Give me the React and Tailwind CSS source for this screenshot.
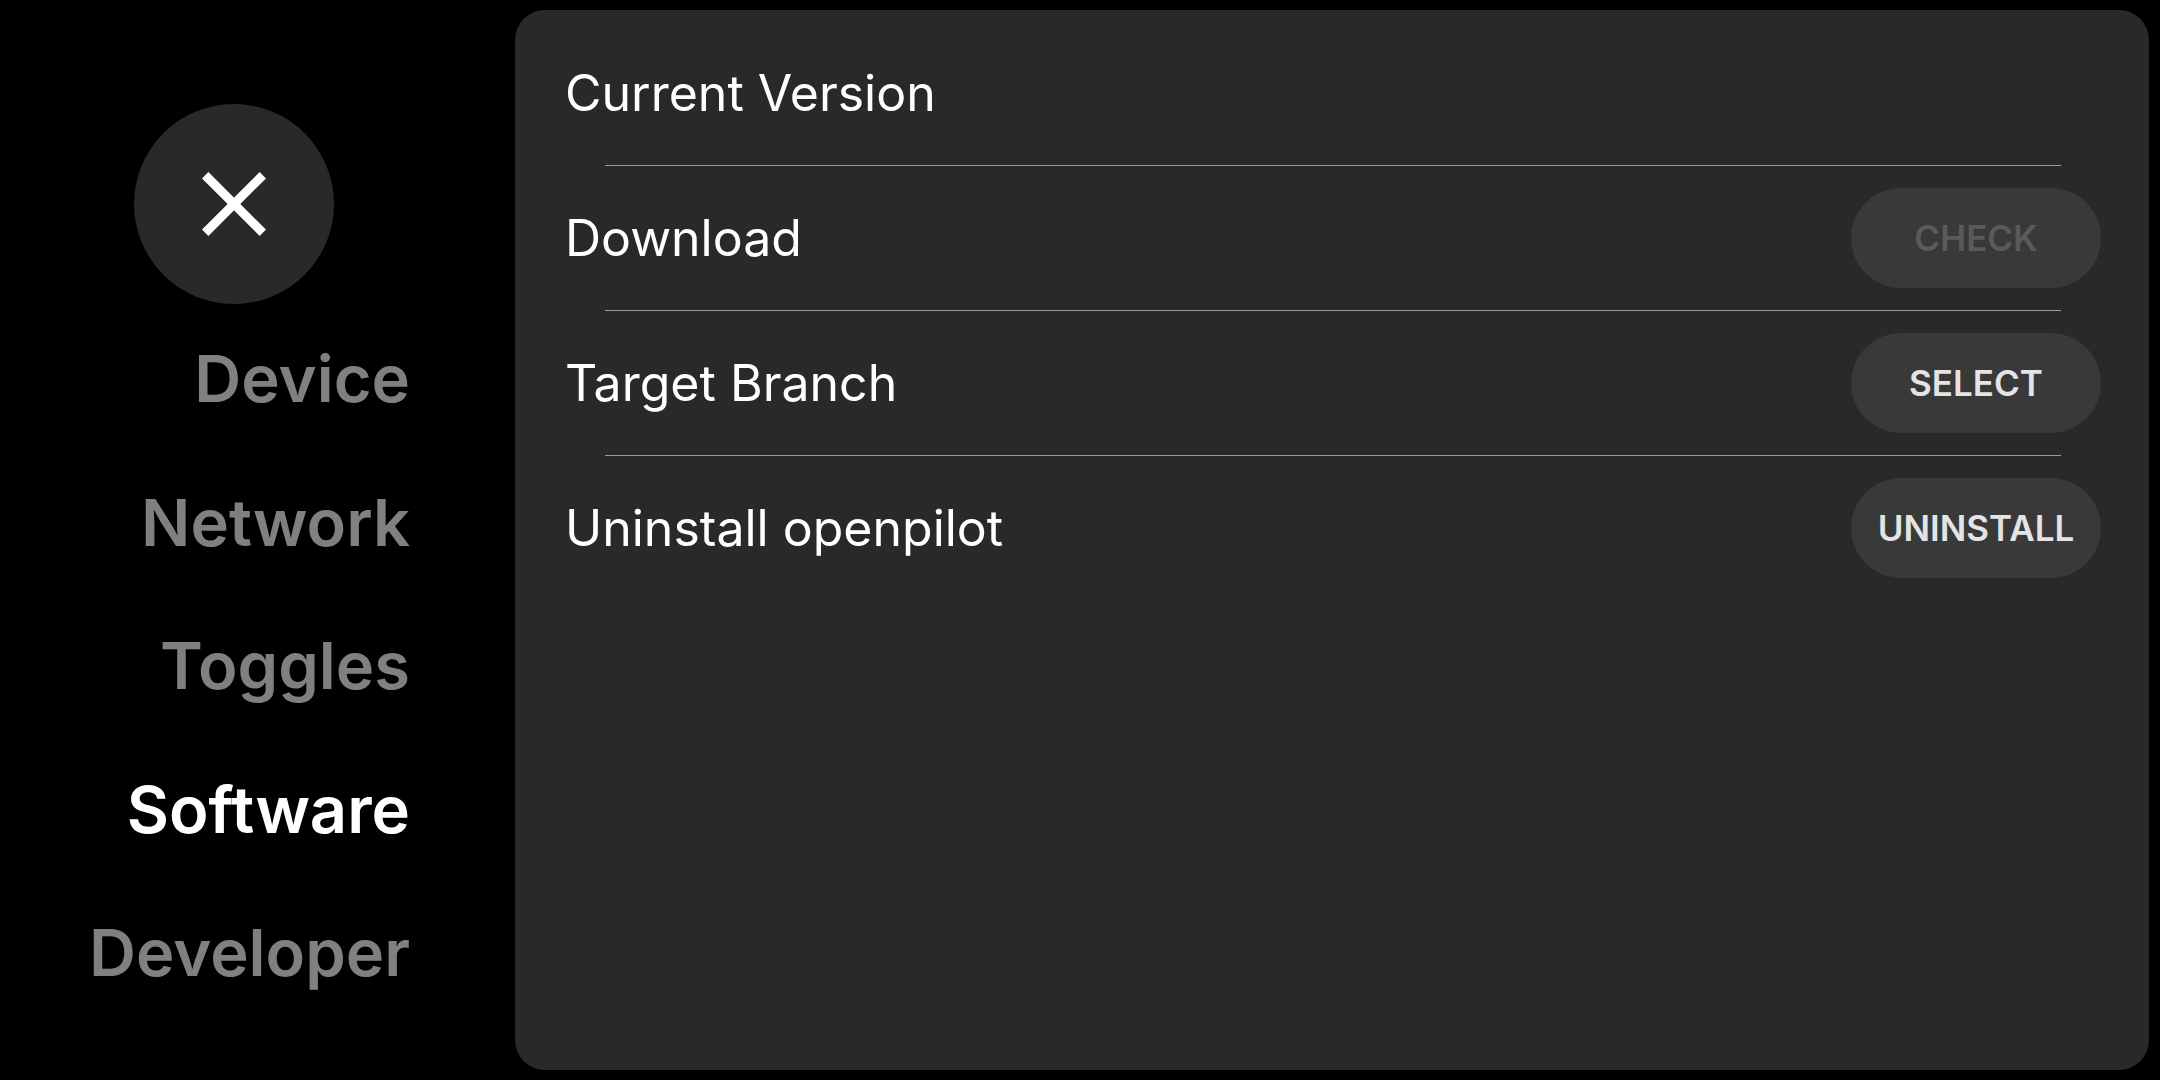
import React from 'react'

const navItems = ['Device', 'Network', 'Toggles', 'Software', 'Developer']

const rows = [
  { label: 'Current Version' },
  { label: 'Download', button: 'CHECK', disabled: true },
  { label: 'Target Branch', button: 'SELECT' },
  { label: 'Uninstall openpilot', button: 'UNINSTALL' },
]

function CloseIcon() {
  return (
    <svg width="64" height="64" viewBox="0 0 64 64">
      <line x1="3.2" y1="3.2" x2="60.8" y2="60.8" stroke="white" strokeWidth="9" />
      <line x1="60.8" y1="3.2" x2="3.2" y2="60.8" stroke="white" strokeWidth="9" />
    </svg>
  )
}

function Sidebar() {
  return (
    <div className="w-[515px] shrink-0 flex flex-col pt-[104px]">
      <div className="ml-[134px] w-[200px] h-[200px] rounded-full bg-[#292929] flex items-center justify-center">
        <CloseIcon />
      </div>
      <div className="mt-[3px] flex flex-col pr-[105px]">
        {navItems.map((item) => (
          <div
            key={item}
            className={
              'h-[143.5px] flex items-center justify-end text-[65px] leading-none font-semibold ' +
              (item === 'Software' ? 'text-white' : 'text-[#808080]')
            }
          >
            {item}
          </div>
        ))}
      </div>
    </div>
  )
}

function Row({ label, button, disabled }) {
  return (
    <div className="h-[144px] flex items-center justify-between">
      <span className="text-[50px] leading-none text-white">{label}</span>
      {button && (
        <button
          className={
            'w-[250px] h-[100px] rounded-full bg-[#393939] text-[35px] leading-none font-semibold ' +
            (disabled ? 'text-[#5a5a5a]' : 'text-[#e4e4e4]')
          }
        >
          {button}
        </button>
      )}
    </div>
  )
}

export default function App() {
  return (
    <div className="w-[2160px] h-[1080px] bg-black flex font-['Inter',sans-serif] overflow-hidden">
      <Sidebar />
      <div className="flex-1 py-[10px] pr-[11px]">
        <div className="h-full rounded-[30px] bg-[#292929] pl-[50px] pr-[48px] pt-[11px]">
          {rows.map((row, i) => (
            <div key={row.label}>
              {i > 0 && <div className="h-px bg-[#9a9a9a] mx-[40px]" />}
              <Row {...row} />
            </div>
          ))}
        </div>
      </div>
    </div>
  )
}
